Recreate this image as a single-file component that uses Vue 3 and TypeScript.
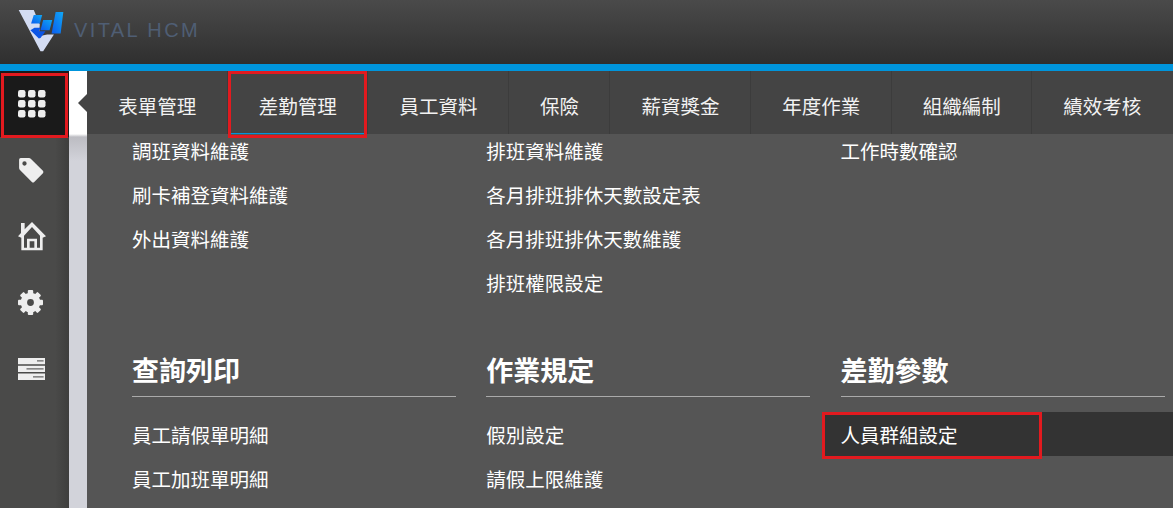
<script setup lang="ts">
interface MenuColumn {
  title?: string
  items: string[]
}

const tabs = ['表單管理', '差勤管理', '員工資料', '保險', '薪資獎金', '年度作業', '組織編制', '績效考核']

const topColumns: MenuColumn[] = [
  { items: ['調班資料維護', '刷卡補登資料維護', '外出資料維護'] },
  { items: ['排班資料維護', '各月排班排休天數設定表', '各月排班排休天數維護', '排班權限設定'] },
  { items: ['工作時數確認'] }
]

const bottomColumns: MenuColumn[] = [
  { title: '查詢列印', items: ['員工請假單明細', '員工加班單明細'] },
  { title: '作業規定', items: ['假別設定', '請假上限維護'] },
  { title: '差勤參數', items: ['人員群組設定'] }
]

const activeItem = '人員群組設定'
</script>

<template>
  <div class="page">
    <header class="topbar">
      <svg class="logo" viewBox="55 27 140 128" width="47" height="43">
        <defs>
          <linearGradient id="blue" x1="0" y1="1" x2="1" y2="0">
            <stop offset="0" stop-color="#0a5cf0" />
            <stop offset="1" stop-color="#10a8f5" />
          </linearGradient>
        </defs>
        <path d="M57 30H102L120 73L117 108L142 103H162L130 153H122Z" fill="#d3dcf3" />
        <path d="M92 90L104 83H122L117 93H137L122 113L117 115Z" fill="#0b55e6" />
        <path d="M102 45H127L120 70H94Z" fill="url(#blue)" />
        <path d="M130 60H157L149 90H122Z" fill="url(#blue)" />
        <path d="M167 36H190L182 100H155Z" fill="url(#blue)" />
      </svg>
      <span class="brand">VITAL HCM</span>
    </header>
    <div class="blue-line"></div>

    <div class="body">
      <aside class="sidebar">
        <div class="side-item active">
          <svg viewBox="0 0 27.5 27.5" width="27.5" height="27.5">
            <rect v-for="n in 9" :key="n" :x="(n - 1) % 3 * 10" :y="Math.floor((n - 1) / 3) * 10" width="7.5" height="7.5" rx="2.2" fill="#eee" />
          </svg>
        </div>
        <div class="side-item">
          <svg viewBox="0 0 24 24" width="26" height="26">
            <path fill-rule="evenodd" fill="#eee" d="M1 2.5Q1 1 2.5 1H10Q11.2 1 12 1.8L23 12.8Q24 14 23 15L15 23Q14 24 12.8 23L1.8 12Q1 11.2 1 10ZM6 4A2 2 0 1 0 6 8A2 2 0 1 0 6 4Z" />
          </svg>
        </div>
        <div class="side-item">
          <svg viewBox="18 15 84 87" width="28" height="29">
            <path fill="#eee" d="M60 15L102 58L92 62V100H28V62L18 58L27 48V18H38V37Z" />
            <path fill="#4a4a49" d="M60 30L84 56V92H75V65H45V92H36V56ZM53 73H67V92H53Z" />
          </svg>
        </div>
        <div class="side-item gear">
          <svg viewBox="-12.5 -12.5 25 25" width="25" height="25">
            <circle r="6.6" fill="none" stroke="#eee" stroke-width="6.4" />
            <rect v-for="n in 8" :key="n" x="-2.7" y="-12.5" width="5.4" height="5.5" rx="1" fill="#eee" :transform="`rotate(${n * 45})`" />
          </svg>
        </div>
        <div class="side-item">
          <svg viewBox="0 0 27 22" width="27" height="22">
            <path fill="#eee" d="M0 0H27V6.2H0ZM0 7.8H27V14H0ZM0 15.6H27V22H0Z" />
            <path fill="#666" d="M19 2.3H25.6V3.6H19ZM8.5 10.3H25.6V11.6H8.5ZM15 18.2H25.6V19.5H15Z" />
          </svg>
        </div>
      </aside>

      <div class="gutter"></div>

      <main class="panel">
        <span class="caret"></span>
        <nav class="tabs">
          <div
            v-for="(tab, i) in tabs"
            :key="tab"
            class="tab"
            :class="{ current: i === 1 }"
          >
            {{ tab }}
          </div>
        </nav>

        <section class="menu">
          <div class="menu-row top">
            <ul v-for="(col, i) in topColumns" :key="i" class="col">
              <li v-for="item in col.items" :key="item">{{ item }}</li>
            </ul>
          </div>
          <div class="menu-row bottom">
            <ul v-for="col in bottomColumns" :key="col.title" class="col">
              <li class="title">{{ col.title }}</li>
              <li
                v-for="item in col.items"
                :key="item"
                :class="{ selected: item === activeItem }"
              >
                {{ item }}
              </li>
            </ul>
          </div>
        </section>
      </main>
    </div>

    <!-- red callouts drawn over the screenshot -->
    <div class="mark mark-side"></div>
    <div class="mark mark-tab"></div>
    <div class="mark mark-row"></div>
  </div>
</template>

<style scoped>
.page {
  position: relative;
  width: 1173px;
  height: 508px;
  overflow: hidden;
  font-family: "Noto Sans CJK TC", "Liberation Sans", sans-serif;
  color: #fff;
}

.topbar {
  height: 64px;
  box-sizing: border-box;
  display: flex;
  align-items: flex-start;
  padding: 9px 0 0 18px;
  background: linear-gradient(#4a4a4a, #2f2f2f);
}

.logo {
  flex: none;
}

.brand {
  margin: 8px 0 0 9px;
  font-family: "Liberation Sans", sans-serif;
  font-size: 20px;
  line-height: 26px;
  letter-spacing: 2.4px;
  color: #4f5e74;
}

.blue-line {
  height: 7px;
  background: #0095dc;
}

.body {
  display: flex;
  height: 437px;
}

.sidebar {
  flex: none;
  width: 69px;
  background: linear-gradient(90deg, #4a4a49 80%, #3e3e3d);
}

.side-item {
  height: 66px;
  display: flex;
  align-items: center;
  justify-content: flex-start;
  padding-left: 18px;
  box-sizing: border-box;
}

.side-item.active {
  background: #1a1a1a;
}

.side-item.gear svg {
  margin-top: 1px;
}

.side-item:last-child svg {
  margin-top: 1px;
}

.gutter {
  flex: none;
  width: 18px;
  background: linear-gradient(#fff 0, #fff 63px, #bcbcc2 66px, #d2d3da 90px);
}

.panel {
  position: relative;
  flex: 1;
  min-width: 0;
  background: #555;
}

.caret {
  position: absolute;
  left: -9px;
  top: 23px;
  border-style: solid;
  border-width: 9px 9px 9px 0;
  border-color: transparent #444 transparent transparent;
}

.tabs {
  display: flex;
  height: 63px;
  background: #444;
}

.tab {
  padding: 0 30.4px 0 31.2px;
  line-height: 70px;
  height: 63px;
  font-size: 19.5px;
  white-space: nowrap;
  color: #f2f2f2;
  border-right: 1px solid #3c3c3c;
  box-sizing: content-box;
}

.tab:last-child {
  border-right: 0;
}

.tab.current {
  box-shadow: inset 0 -1px 0 #0095dc;
}

.menu-row {
  display: grid;
  grid-template-columns: 354.3px 354.3px 1fr;
}

.menu-row.top {
  height: 218px;
  margin-top: -5px;
}

.col {
  list-style: none;
  margin: 0;
  padding: 0;
}

.col li {
  height: 44px;
  line-height: 44px;
  padding-left: 45px;
  font-size: 19.5px;
  white-space: nowrap;
  color: #fff;
}

.bottom .col li {
  line-height: 46px;
}

.bottom .col li.title {
  height: 49px;
  line-height: 46px;
  margin: 0 0 15px 45px;
  padding-left: 0;
  width: 324px;
  font-size: 27px;
  font-weight: 700;
  border-bottom: 1px solid #aaa;
}

.col li.selected {
  background: #333;
  margin-left: 27px;
  padding-left: 18px;
}

.mark {
  position: absolute;
  box-sizing: border-box;
  border: 3px solid #e21a1f;
  pointer-events: none;
}

.mark-side {
  left: 1px;
  top: 73px;
  width: 67px;
  height: 65px;
}

.mark-tab {
  left: 228px;
  top: 71px;
  width: 139px;
  height: 67px;
}

.mark-row {
  left: 822px;
  top: 412px;
  width: 220px;
  height: 47px;
}
</style>
